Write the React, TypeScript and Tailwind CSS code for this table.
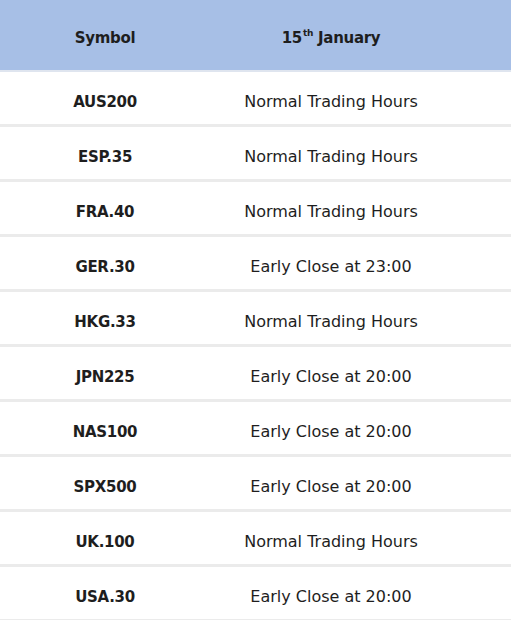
const rows: [string, string][] = [
  ['AUS200', 'Normal Trading Hours'],
  ['ESP.35', 'Normal Trading Hours'],
  ['FRA.40', 'Normal Trading Hours'],
  ['GER.30', 'Early Close at 23:00'],
  ['HKG.33', 'Normal Trading Hours'],
  ['JPN225', 'Early Close at 20:00'],
  ['NAS100', 'Early Close at 20:00'],
  ['SPX500', 'Early Close at 20:00'],
  ['UK.100', 'Normal Trading Hours'],
  ['USA.30', 'Early Close at 20:00'],
]

export default function App() {
  return (
    <div className="w-[511px] h-[620px] overflow-hidden bg-white font-['DejaVu_Sans',sans-serif] text-[16px] text-[#1e1e1e]">
      {/* Header */}
      <div className="flex h-[72px] items-center pt-[6px] bg-[#a7bfe6] border-b-2 border-[#dfe5ef] font-bold text-[15px] tracking-[-0.3px]">
        <div className="w-[210px] text-center">Symbol</div>
        <div className="w-[242px] text-center">
          15<sup className="text-[9px] align-[2px] ml-[1px]">th</sup> January
        </div>
      </div>

      {rows.map(([symbol, status]) => (
        <div
          key={symbol}
          className="flex h-[55px] items-center pt-[8px] border-b-[3px] border-[#ebebeb]"
        >
          <div className="w-[210px] text-center font-bold text-[15px] tracking-[-0.3px]">{symbol}</div>
          <div className="w-[242px] text-center">{status}</div>
        </div>
      ))}
    </div>
  )
}
